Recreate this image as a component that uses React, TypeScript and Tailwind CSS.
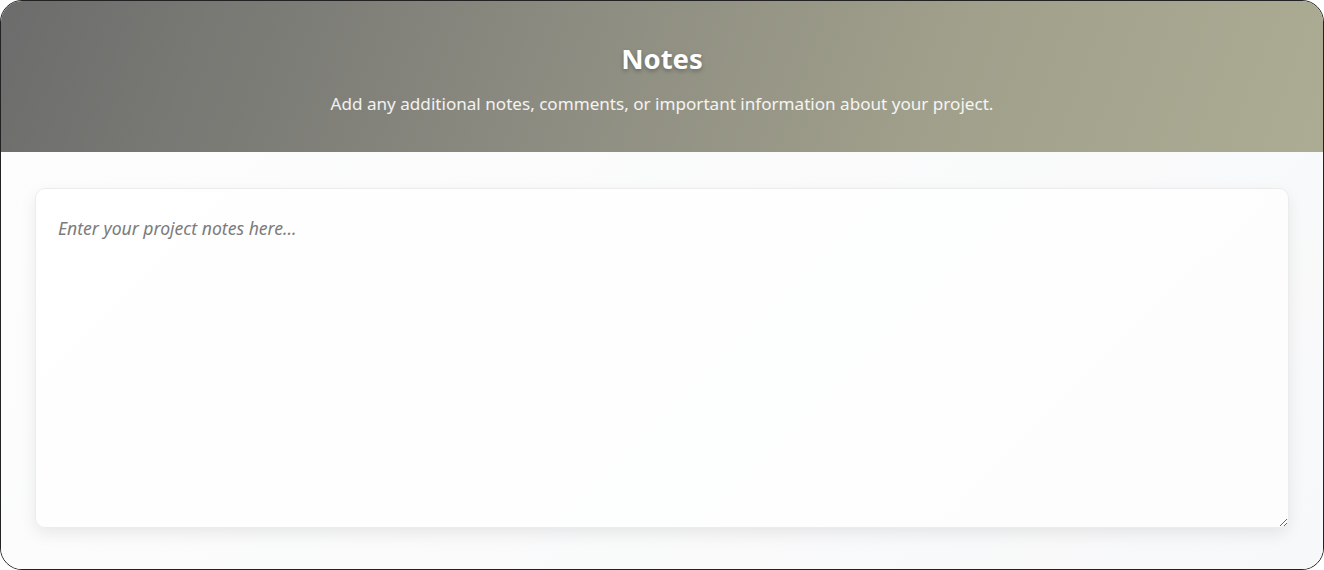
export default function App() {
  return (
    <div className="h-[570px] w-[1324px] overflow-hidden rounded-[22px] border-[1.5px] border-[#222] bg-[#f8f9fa] font-['Noto_Sans',sans-serif]">
      <div className="flex h-[151px] flex-col items-center bg-[linear-gradient(110deg,#6c6c6c_0%,#8a8a80_40%,#a09f8b_70%,#acab93_100%)] pt-[40px]">
        <h2 className="text-[27.5px] leading-[36px] font-bold text-white [text-shadow:0_2px_4px_rgba(0,0,0,0.3)]">
          Notes
        </h2>
        <p className="mt-[15px] text-[17.1px] leading-[24px] text-white/90">
          Add any additional notes, comments, or important information about your project.
        </p>
      </div>
      <div className="h-[418px] bg-[linear-gradient(135deg,#fdfdfd_0%,#f7f8f9_100%)] px-[34px] pt-[36px]">
        <textarea
          placeholder="Enter your project notes here..."
          className="block h-[340px] w-full resize-y rounded-[10px] border border-[#ececec] bg-white/70 px-[22px] py-[27px] text-[17.6px] leading-[24px] text-gray-700 shadow-[0_6px_16px_rgba(0,0,0,0.08)] outline-none placeholder:text-[#7b7b7b] placeholder:italic"
        />
      </div>
    </div>
  );
}
